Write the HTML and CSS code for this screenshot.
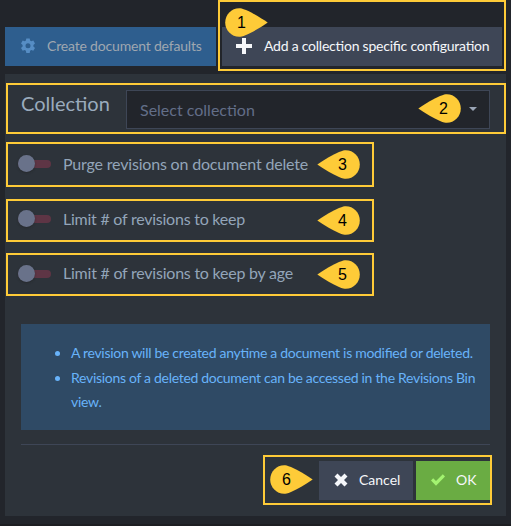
FILE: index.html
```html
<!DOCTYPE html>
<html lang="en">
<head>
<meta charset="utf-8">
<title>Document revisions</title>
<link rel="stylesheet" href="styles.css">
</head>
<body>
<svg class="defs" width="0" height="0" aria-hidden="true">
  <symbol id="pin" viewBox="0 0 43 29">
    <path d="M42.7 14.5C36 9.800 27.500 4.800 21 2C17.500.500 15.500.200 14.200.200C6.400.200.200 6.600.200 14.500S6.400 28.800 14.200 28.800C15.500 28.800 17.500 28.500 21 27C27.500 24.200 36 19.200 42.700 14.500Z"/>
  </symbol>
</svg>
<div class="page">
  <div class="toolbar">
    <button class="btn btn-primary">
      <svg class="icon gear" viewBox="0 0 16 16"><path fill-rule="evenodd" d="M6.300.5h3.400l.4 2.100 1.200.7 2-.7 1.700 2.900-1.600 1.400v1.600l1.600 1.400-1.700 2.900-2-.7-1.200.7-.4 2.200H6.300l-.4-2.200-1.200-.7-2 .7L1 9.900l1.600-1.400V6.900L1 5.500l1.700-2.900 2 .7 1.200-.7zM8 5.200a2.500 2.500 0 1 0 0 5 2.500 2.500 0 0 0 0-5z"/></svg>
      <span class="label-defaults">Create document defaults</span>
    </button>
    <button class="btn btn-default btn-add">
      <svg class="icon plus" viewBox="0 0 16 16"><path d="M6 0h4v6h6v4h-6v6H6v-6H0V6h6z"/></svg>
      <span class="label-add">Add a collection specific configuration</span>
    </button>
  </div>
  <div class="panel">
    <div class="collection">
      <label>Collection</label>
      <div class="select"><span>Select collection</span><i class="caret"></i></div>
    </div>
    <div class="toggles">
      <div class="toggle"><i class="switch"></i><span class="t1">Purge revisions on document delete</span></div>
      <div class="toggle"><i class="switch"></i><span class="t2">Limit # of revisions to keep</span></div>
      <div class="toggle"><i class="switch"></i><span class="t3">Limit # of revisions to keep by age</span></div>
    </div>
    <ul class="info">
      <li class="n1">A revision will be created anytime a document is modified or deleted.</li>
      <li class="n2">Revisions of a deleted document can be accessed in the Revisions Bin view.</li>
    </ul>
    <div class="actions">
      <button class="btn btn-default btn-cancel">
        <svg class="icon cross" viewBox="0 0 14 14"><path d="M3.500.5 7 4l3.500-3.500 3 3L10 7l3.500 3.500-3 3L7 10l-3.500 3.500-3-3L4 7 .5 3.500z"/></svg>
        <span>Cancel</span>
      </button>
      <button class="btn btn-success">
        <svg class="icon check" viewBox="0 0 14 12"><path d="M0 6.500 2.200 4.300 5 7.100 11.800.3 14 2.500 5 11.700z"/></svg>
        <span>OK</span>
      </button>
    </div>
  </div>
  <div class="mark m1"></div><div class="mark m2"></div><div class="mark m3"></div>
  <div class="mark m4"></div><div class="mark m5"></div><div class="mark m6"></div>
  <div class="pin right p1"><svg><use href="#pin"/></svg><b>1</b></div>
  <div class="pin left p2"><svg><use href="#pin"/></svg><b>2</b></div>
  <div class="pin left p3"><svg><use href="#pin"/></svg><b>3</b></div>
  <div class="pin left p4"><svg><use href="#pin"/></svg><b>4</b></div>
  <div class="pin left p5"><svg><use href="#pin"/></svg><b>5</b></div>
  <div class="pin right p6"><svg><use href="#pin"/></svg><b>6</b></div>
</div>
</body>
</html>
```
FILE: styles.css
```css
* { box-sizing: border-box; }
body { margin: 0; background: #22252b; font-family: Lato, sans-serif; font-feature-settings: "liga" 1; }
.defs { position: absolute; }
.page { position: relative; width: 511px; height: 526px; padding: 27px 5px 0; overflow: hidden; border-bottom: 2px solid #1d1e22; }
.toolbar { display: flex; gap: 6px; height: 39px; }
.btn { display: flex; align-items: center; height: 39px; margin: 0; padding: 0 0 1px; border: 0; font: 14px/20px Lato, sans-serif; font-feature-settings: "liga" 1; white-space: nowrap; }
.icon { display: block; flex: none; fill: currentColor; }
.btn-primary { width: 211px; padding-left: 15px; background: #2e5e8e; color: #9fa7b0; }
.btn-default { background: #3e4656; color: #f5f7fa; }
.btn-add { width: 280px; padding-left: 14px; }
.label-defaults { letter-spacing: -.18px; }
.label-add { letter-spacing: -.23px; }
.gear { width: 16px; height: 16px; margin-right: 11px; color: #568dc4; }
.plus { width: 16px; height: 16px; margin-right: 12px; }
.panel { width: 501px; height: 442px; margin-top: 8px; padding: 16px 16px 0; background: #2d333a; }
.collection { display: flex; }
.collection label { width: 105px; color: #9aabbd; font-size: 20px; line-height: 26px; }
.select { display: flex; align-items: center; justify-content: space-between; width: 364px; height: 39px; padding: 0 12px 0 13px; border: 1px solid #3e4656; background: #22252b; color: #626e88; font-size: 16px; }
.caret { margin-top: -2px; border: 4px solid transparent; border-top-color: #9aa5b6; border-bottom: 0; }
.toggles { padding-top: 20px; margin-left: -3px; }
.toggle { display: flex; align-items: center; height: 30px; margin-bottom: 25px; color: #93a5b9; font-size: 16px; line-height: 24px; }
.toggle:last-child { margin-bottom: 0; }
.t1 { letter-spacing: -.18px; }
.t2 { letter-spacing: -.24px; }
.t3 { letter-spacing: -.23px; margin-top: -2px; }
.switch { position: relative; width: 33px; height: 8px; margin-right: 12px; border-radius: 4px; background: #5e3545; }
.switch::before { content: ""; position: absolute; left: 0; top: -5px; width: 17px; height: 17px; border-radius: 50%; background: #69728a; box-shadow: 0 1px 2px #2228; }
.info { width: 469px; height: 106px; margin: 35px 0 0; padding: 17px 10px 0 50px; background: #2f4a65; color: #68b3fa; font-size: 14px; line-height: 24.500px; letter-spacing: -.3px; }
.actions { display: flex; justify-content: flex-end; gap: 3px; margin-top: 14px; padding-top: 16px; border-top: 1px solid #3e4656; }
.btn-cancel { width: 94px; padding-left: 15px; }
.cross { width: 14px; height: 14px; margin-right: 11px; }
.btn-success { width: 74px; padding-left: 15px; background: #6aac43; color: #f5f7fa; }
.check { width: 14px; height: 12px; margin-right: 11px; color: #a3f370; }
.mark { position: absolute; border: 2px solid #fecb38; }
.m1 { left: 218px; top: 0; width: 288px; height: 71px; }
.m2 { left: 6px; top: 83px; width: 500px; height: 51px; }
.m3 { left: 6px; top: 142px; width: 368px; height: 45px; }
.m4 { left: 6px; top: 199px; width: 368px; height: 43px; }
.m5 { left: 6px; top: 253px; width: 368px; height: 43px; }
.m6 { left: 263px; top: 455px; width: 229px; height: 50px; }
.pin { position: absolute; width: 43px; height: 29px; }
.pin svg { display: block; width: 43px; height: 29px; fill: #fecb38; }
.pin.left svg { transform: scaleX(-1); }
.pin b { position: absolute; top: 5px; width: 20px; text-align: center; font: 16px/20px "Liberation Sans", sans-serif; color: #000; }
.right b { left: 7px; }
.left b { left: 16px; }
.p1 { left: 224.500px; top: 7.500px; }
.p2 { left: 417.500px; top: 94px; }
.p3 { left: 316.500px; top: 149.500px; }
.p4 { left: 316.500px; top: 205.500px; }
.p5 { left: 316.500px; top: 259.500px; }
.p6 { left: 269.500px; top: 465px; }
```
